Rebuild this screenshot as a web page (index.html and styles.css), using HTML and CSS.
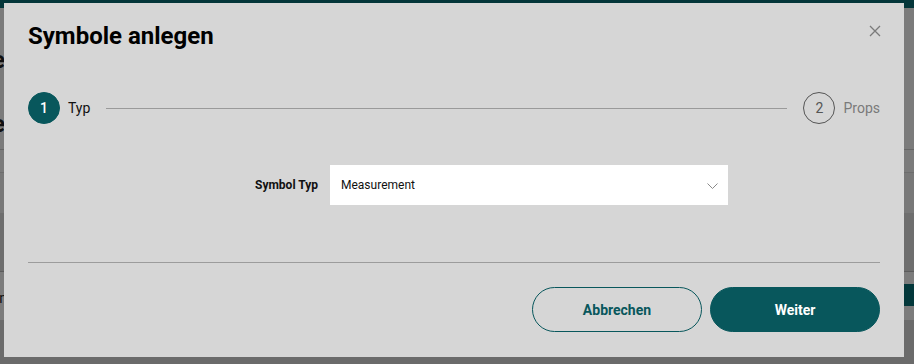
FILE: index.html
```html
<!DOCTYPE html>
<html lang="de">
<head>
<meta charset="utf-8">
<title>Symbole anlegen</title>
<link rel="stylesheet" href="styles.css">
</head>
<body>
<div class="page">
  <div class="bg-top"></div>
  <div class="bg-head"><span class="bg-text t1">Tabelle</span><span class="bg-text t2">Tabelle</span></div>
  <div class="bg-row"></div>
  <div class="bg-row2"></div>
  <div class="bg-dark"></div>
  <div class="bg-row3"><span class="bg-text t3">Daten</span><span class="bg-btn"></span></div>
  <div class="bg-foot"></div>
</div>
<div class="dialog" role="dialog">
  <button class="close" aria-label="Schließen">
    <svg width="12" height="12" viewBox="0 0 12 12"><path d="M1 1L11 11M11 1L1 11" stroke="#7a7a7a" stroke-width="1.3" fill="none"/></svg>
  </button>
  <h1 class="title">Symbole anlegen</h1>
  <div class="stepper">
    <div class="step active"><span class="step-num">1</span><span class="step-label">Typ</span></div>
    <div class="step-line"></div>
    <div class="step"><span class="step-num">2</span><span class="step-label">Props</span></div>
  </div>
  <div class="form-row">
    <label class="form-label">Symbol Typ</label>
    <div class="select">
      <span class="select-value">Measurement</span>
      <svg class="chevron" width="11" height="6" viewBox="0 0 11 6"><path d="M0.5 0.5L5.5 5.5L10.5 0.5" stroke="#8a8a8a" stroke-width="1" fill="none"/></svg>
    </div>
  </div>
  <div class="divider"></div>
  <div class="actions">
    <button class="btn btn-outline">Abbrechen</button>
    <button class="btn btn-primary">Weiter</button>
  </div>
</div>
</body>
</html>
```
FILE: styles.css
```css
* { box-sizing: border-box; }
html, body { margin: 0; padding: 0; }
body {
  width: 914px;
  height: 364px;
  overflow: hidden;
  font-family: Roboto, "Liberation Sans", sans-serif;
  background: #6b6b6b;
  position: relative;
}
.page { display: flex; flex-direction: column; }
.bg-top { height: 8px; background: #04363a; }
.bg-head { height: 142px; background: #7b7b7b; border-bottom: 1px solid #666; position: relative; }
.bg-text { position: absolute; font-weight: 700; font-size: 24px; color: #111; white-space: nowrap; }
.t1 { right: 909px; top: 38px; }
.t2 { right: 909px; top: 102px; }
.t3 { right: 907px; top: 18px; font-size: 14px; font-weight: 400; }
.bg-row { height: 23px; background: #7b7b7b; border-bottom: 1px solid #6d6d6d; }
.bg-row2 { height: 40px; background: #787878; }
.bg-dark { height: 59px; background: #6e6e6e; border-bottom: 1px solid #5c5c5c; }
.bg-row3 { height: 48px; background: #7c7c7c; position: relative; }
.bg-btn { position: absolute; right: -10px; top: 12px; width: 34px; height: 22px; border-radius: 11px; background: #03383b; }
.bg-foot { height: 44px; background: #6b6b6b; }

.dialog {
  position: absolute;
  left: 4px;
  top: 3px;
  width: 900px;
  height: 354px;
  background: #d6d6d6;
  padding: 19px 24px 25px;
  display: flex;
  flex-direction: column;
}
.close {
  position: absolute;
  right: 22px;
  top: 21px;
  width: 14px;
  height: 14px;
  padding: 0;
  border: 0;
  background: none;
  display: flex;
  align-items: center;
  justify-content: center;
}
.title {
  margin: 0;
  font-size: 24px;
  line-height: 28px;
  font-weight: 700;
  color: #000;
}
.stepper {
  margin-top: 42px;
  height: 32px;
  display: flex;
  align-items: center;
}
.step { display: flex; align-items: center; gap: 8px; }
.step-num {
  width: 32px;
  height: 32px;
  border-radius: 50%;
  border: 1px solid #555;
  display: flex;
  align-items: center;
  justify-content: center;
  font-size: 14px;
  color: #555;
}
.step-label { font-size: 14px; color: #7a7a7a; }
.step.active .step-num { background: #08575c; border-color: #08575c; color: #fff; font-weight: 500; }
.step.active .step-label { color: #111; }
.step-line { flex: 1; height: 1px; background: #9a9a9a; margin: 0 16px 0 16px; }

.form-row {
  margin-top: 41px;
  display: grid;
  grid-template-columns: 290px 398px;
  column-gap: 12px;
  align-items: center;
}
.form-label { text-align: right; font-size: 12px; font-weight: 700; color: #111; }
.select {
  height: 40px;
  background: #fff;
  display: flex;
  align-items: center;
  justify-content: space-between;
  padding: 0 10px 0 11px;
}
.select-value { font-size: 12px; color: #111; }
.chevron { margin-top: 1px; }

.divider { margin-top: 57px; height: 1px; background: #9c9c9c; }
.actions {
  margin-top: 24px;
  display: flex;
  justify-content: flex-end;
  gap: 8px;
}
.btn {
  width: 170px;
  height: 45px;
  border-radius: 23px;
  font-family: Roboto, "Liberation Sans", sans-serif;
  font-size: 14px;
  font-weight: 700;
  cursor: pointer;
}
.btn-outline { background: transparent; border: 1px solid #08575c; color: #08575c; }
.btn-primary { background: #08575c; border: 1px solid #08575c; color: #fff; }
```
